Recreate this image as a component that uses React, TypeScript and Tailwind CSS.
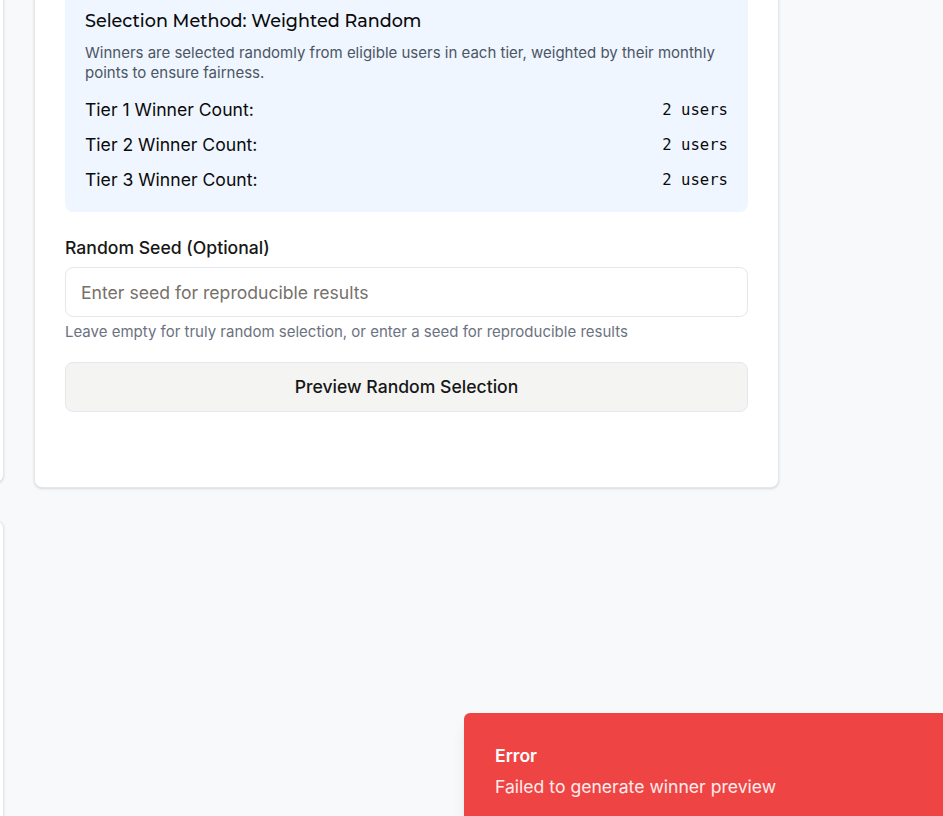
const tiers = [
  { label: "Tier 1 Winner Count:", count: 2 },
  { label: "Tier 2 Winner Count:", count: 2 },
  { label: "Tier 3 Winner Count:", count: 2 },
];

function SideColumn() {
  return (
    <div className="flex w-[304px] shrink-0 -ml-[300px] flex-col">
      <div className="-mt-[40px] h-[523px] rounded-lg border border-gray-200 bg-white shadow-sm" />
      <div className="mt-[37px] h-[400px] rounded-lg border border-gray-200 bg-white shadow-sm" />
    </div>
  );
}

function SelectionCard() {
  return (
    <div className="-mt-[40px] h-[528px] w-[745px] shrink-0 rounded-lg border border-gray-200 bg-white px-[30px] shadow-sm">
      <div className="mt-[26px] rounded-lg bg-[#eff6ff] px-5 pb-[14px] pt-[20px]">
        <h3 className="text-[17.6px] font-medium leading-[28px] text-[#0a0a0a] [font-family:Montserrat,'Noto_Sans',sans-serif]">
          Selection Method: Weighted Random
        </h3>
        <p className="mt-[8px] text-[15px] leading-[20px] text-[#4b5563]">
          Winners are selected randomly from eligible users in each tier, weighted by their monthly points to ensure
          fairness.
        </p>
        <div className="mt-[10px] flex flex-col">
          {tiers.map((t) => (
            <div key={t.label} className="flex h-[35px] items-center justify-between">
              <span className="text-[17.6px] text-[#0a0a0a]">{t.label}</span>
              <span className="text-[15.6px] text-[#0a0a0a] [font-family:'DejaVu_Sans_Mono',monospace]">
                {t.count} users
              </span>
            </div>
          ))}
        </div>
      </div>

      <label className="mt-[24px] block text-[17.6px] font-medium leading-[24px] text-[#171717]">
        Random Seed (Optional)
      </label>
      <input
        className="mt-[7px] h-[50px] w-full rounded-lg border border-gray-200 bg-white px-[15px] text-[17.6px] text-gray-900 outline-none placeholder:text-[#76706b]"
        placeholder="Enter seed for reproducible results"
      />
      <p className="mt-[5px] text-[15px] leading-[20px] text-[#6b7280]">
        Leave empty for truly random selection, or enter a seed for reproducible results
      </p>
      <button className="mt-[20px] h-[50px] w-full rounded-lg border border-gray-200 bg-[#f4f4f3] text-[17.6px] font-medium text-[#171717]">
        Preview Random Selection
      </button>
    </div>
  );
}

export default function App() {
  return (
    <div className="relative h-[816px] w-full overflow-hidden bg-[#f8f9fb] [font-family:Inter,'Noto_Sans',sans-serif]">
      <div className="flex items-start gap-[30px]">
        <SideColumn />
        <SelectionCard />
      </div>

      <div className="absolute left-[464px] top-[713px] h-[140px] w-[520px] rounded-md bg-[#ef4444] px-[31px] pt-[30px] shadow-lg">
        <div className="text-[17.6px] font-semibold leading-[26px] text-white">Error</div>
        <div className="mt-[5px] text-[17.6px] leading-[26px] text-white/90">Failed to generate winner preview</div>
      </div>
    </div>
  );
}
